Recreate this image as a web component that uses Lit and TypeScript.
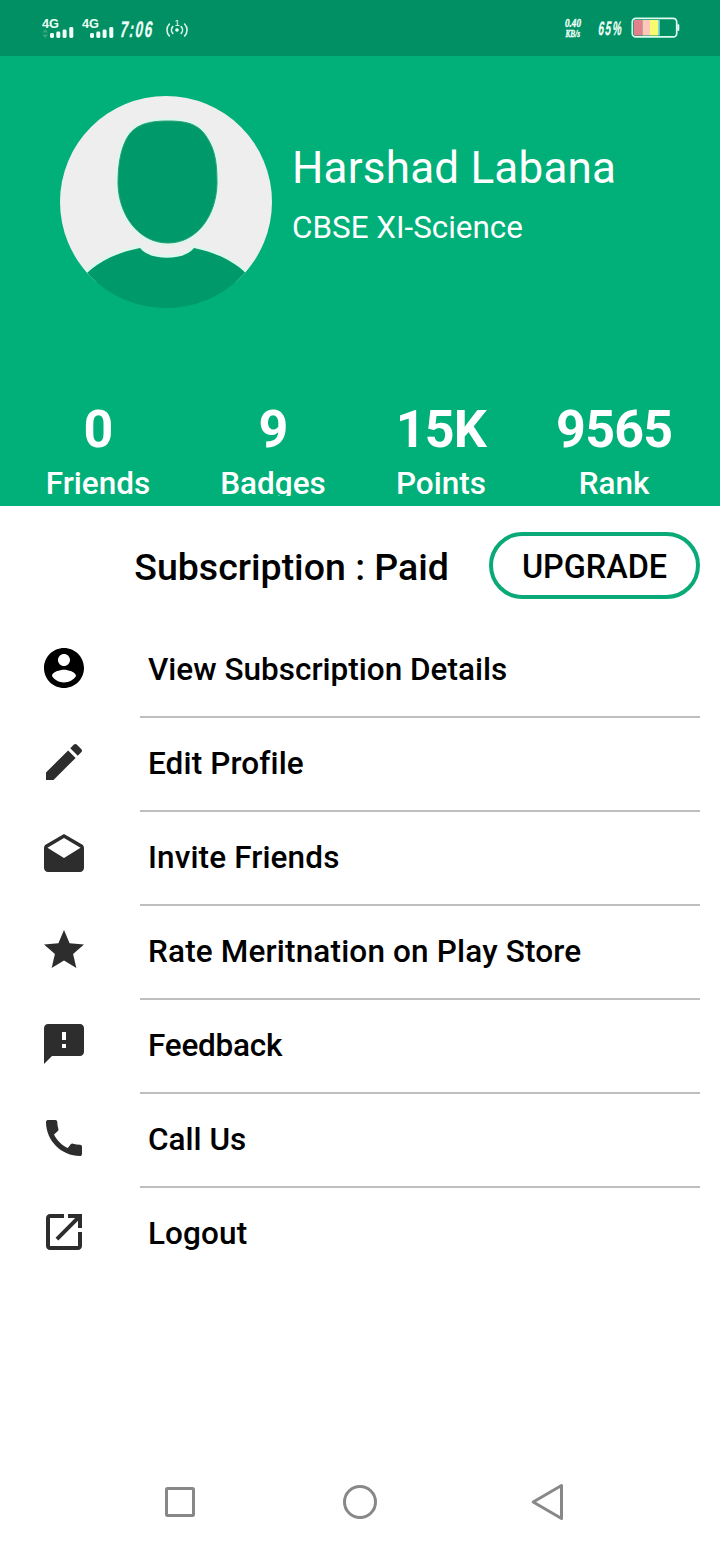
import { LitElement, html, css, svg } from "lit";
import { customElement } from "lit/decorators.js";
import { styleMap } from "lit/directives/style-map.js";

const stats = [
  { value: "0", label: "Friends" },
  { value: "9", label: "Badges" },
  { value: "15K", label: "Points" },
  { value: "9565", label: "Rank" },
];

const menu = [
  {
    label: "View Subscription Details",
    tracking: 0,
    strong: true,
    path: "M12 2C6.48 2 2 6.48 2 12s4.48 10 10 10 10-4.48 10-10S17.52 2 12 2zm0 3c1.66 0 3 1.34 3 3s-1.34 3-3 3-3-1.34-3-3 1.34-3 3-3zm0 14.2c-2.5 0-4.71-1.28-6-3.22.03-1.99 4-3.08 6-3.08 1.99 0 5.97 1.09 6 3.08-1.29 1.94-3.5 3.22-6 3.22z",
  },
  {
    label: "Edit Profile",
    tracking: 0.12,
    path: "M3 17.25V21h3.75L17.81 9.94l-3.75-3.75L3 17.25zM20.71 7.04c.39-.39.39-1.02 0-1.41l-2.34-2.34c-.39-.39-1.02-.39-1.41 0l-1.83 1.83 3.75 3.75 1.83-1.83z",
  },
  {
    label: "Invite Friends",
    tracking: 0.12,
    path: "M21.99 8c0-.72-.37-1.35-.94-1.7L12 1 2.95 6.3C2.38 6.65 2 7.28 2 8v10c0 1.1.9 2 2 2h16c1.1 0 2-.9 2-2l-.01-10zM12 13L3.74 7.84 12 3l8.26 4.84L12 13z",
  },
  {
    label: "Rate Meritnation on Play Store",
    tracking: 0.16,
    path: "M12 17.27L18.18 21l-1.64-7.03L22 9.24l-7.19-.61L12 2 9.19 8.63 2 9.24l5.46 4.73L5.82 21z",
  },
  {
    label: "Feedback",
    tracking: -0.25,
    path: "M20 2H4c-1.1 0-1.99.9-1.99 2L2 22l4-4h14c1.1 0 2-.9 2-2V4c0-1.1-.9-2-2-2zm-7 12h-2v-2h2v2zm0-4h-2V6h2v4z",
  },
  {
    label: "Call Us",
    tracking: 0,
    path: "M20.01 15.38c-1.23 0-2.42-.2-3.53-.56-.35-.12-.74-.03-1.01.24l-1.57 1.97c-2.83-1.35-5.48-3.9-6.89-6.83l1.95-1.66c.27-.28.35-.67.24-1.02-.37-1.11-.56-2.3-.56-3.53 0-.54-.45-.99-.99-.99H4.19C3.65 3 3 3.24 3 3.99 3 13.28 10.73 21 20.01 21c.71 0 .99-.63.99-1.18v-3.45c0-.54-.45-.99-.99-.99z",
  },
  {
    label: "Logout",
    tracking: 0.1,
    path: "M5 3C3.9 3 3 3.9 3 5v14c0 1.1.9 2 2 2h14c1.1 0 2-.9 2-2v-7h-2v7H5V5h7V3H5zM14 3v2h3.59L7.76 14.83l1.41 1.41L19 6.41V10h2V3h-7z",
  },
];

@customElement("status-bar")
class StatusBar extends LitElement {
  static styles = css`
    :host { display: block; height: 56px; background: #009063; }
    svg { display: block; }
    .sans { font-family: "Liberation Sans", sans-serif; font-weight: 700; }
    .light { font-family: "Liberation Sans", sans-serif; font-weight: 400; }
    .serif { font-family: "Liberation Serif", serif; font-weight: 700; font-style: italic; stroke: #effff8; stroke-width: 0.4; }
    .cond { font-family: "Liberation Sans", sans-serif; font-weight: 700; font-style: italic; stroke: #effff8; stroke-width: 0.3; }
  `;

  private signal(x: number) {
    return svg`
      <text class="sans" x=${x} y="28" font-size="12.5" textLength="17" lengthAdjust="spacingAndGlyphs">4G</text>
      <rect x=${x + 8} y="33" width="4" height="5" rx="1.4"/>
      <rect x=${x + 14.3} y="31.5" width="4" height="6.5" rx="1.4"/>
      <rect x=${x + 20.6} y="29.5" width="4" height="8.5" rx="1.4"/>
      <rect x=${x + 27.3} y="27" width="4" height="11" rx="1.4"/>`;
  }

  render() {
    return html`<svg width="720" height="56" viewBox="0 0 720 56" fill="#effff8">
      ${this.signal(42)}
      <path d="M42.3 32.6L45.2 29l2.9 3.6zM42.3 34.6h5.8L45.2 38.2z" fill="#35a57c"/>
      ${this.signal(82)}
      <g class="cond" font-size="22.5" transform="translate(120 37) skewX(-4) scale(.6 1)"><text letter-spacing="2.6">7:06</text></g>
      <circle cx="177" cy="30" r="1.8"/>
      <text class="light" x="174.4" y="26" font-size="9.5">1</text>
      <g fill="none" stroke="#d8f5e8" stroke-width="1.6" stroke-linecap="round">
        <path d="M172.8 26.6a5 5 0 0 0 0 6.8M169.4 24a8.6 8.6 0 0 0 0 12M181.2 26.6a5 5 0 0 1 0 6.8M184.6 24a8.6 8.6 0 0 1 0 12"/>
      </g>
      <text class="serif" x="565" y="27" font-size="12.5" textLength="16" lengthAdjust="spacingAndGlyphs">0.40</text>
      <text class="serif" x="565.5" y="37" font-size="10" textLength="14.5" lengthAdjust="spacingAndGlyphs">KB/s</text>
      <g class="cond" font-size="19.5" transform="translate(598 35) skewX(-4) scale(.52 1)"><text letter-spacing="2.8">65%</text></g>
      <rect x="634" y="20" width="8.5" height="15.5" fill="#e2808b"/>
      <rect x="642.5" y="20" width="7.5" height="15.5" fill="#fdc7b9"/>
      <rect x="650" y="20" width="8" height="15.5" fill="#f8fa70"/>
      <rect x="658" y="20" width="1.8" height="15.5" fill="#7fd8d4"/>
      <rect x="632.3" y="18.3" width="44.4" height="18.6" rx="3.5" fill="none" stroke="#dcfcee" stroke-width="1.7"/>
      <rect x="677.3" y="24.3" width="2" height="6.6" rx=".8"/>
    </svg>`;
  }
}

@customElement("profile-header")
class ProfileHeader extends LitElement {
  static styles = css`
    :host {
      display: flex; flex-direction: column; justify-content: space-between;
      box-sizing: border-box; height: 450px; padding: 40px 0 10px;
      background: #01af79; color: #fff; font-family: Roboto, sans-serif; font-weight: 400;
    }
    .person { display: flex; gap: 20px; padding-left: 60px; }
    .avatar { display: block; width: 212px; height: 212px; }
    .who { padding-top: 46px; }
    .name { font-size: 44px; line-height: 52px; letter-spacing: 0.2px; }
    .course { font-size: 31.4px; line-height: 36px; margin-top: 16px; }
    .stats { display: flex; justify-content: center; gap: 70px; height: 97px; padding-right: 2px; overflow: hidden; }
    .stat { text-align: center; }
    .value { font-size: 52px; line-height: 62px; font-weight: 700; letter-spacing: -0.8px; }
    .label { font-size: 31.5px; line-height: 36px; margin-top: 5px; font-weight: 500; }
  `;

  render() {
    return html`
      <div class="person">
        <svg class="avatar" viewBox="0 0 212 212">
          <defs><clipPath id="round"><circle cx="106" cy="106" r="106"/></clipPath></defs>
          <g clip-path="url(#round)">
            <rect width="212" height="186" fill="#eee"/>
            <path d="M0 212C18 185 31 162 80 152C89 165 125 165 134 152C180 162 194 183 212 212V230H0Z"
              fill="#00996a" stroke="#dcf7eb" stroke-width="5" paint-order="stroke"/>
            <path d="M108 25C85 25 72 30 65 46C60 57 58 71 58 88C59 121 80 147 108 147C136 147 156 121 157 88C157 71 156 57 149 45C141 30 131 25 108 25Z"
              fill="#00996a" stroke="#dcf7eb" stroke-width="5" paint-order="stroke"/>
            <path d="M108 25C85 25 72 30 65 46C60 57 58 71 58 88C59 121 80 147 108 147C136 147 156 121 157 88C157 71 156 57 149 45C141 30 131 25 108 25Z"
              fill="none" stroke="#2b9f77" stroke-width="1"/>
          </g>
        </svg>
        <div class="who">
          <div class="name">Harshad Labana</div>
          <div class="course">CBSE XI-Science</div>
        </div>
      </div>
      <div class="stats">
        ${stats.map((s) => html`<div class="stat"><div class="value">${s.value}</div><div class="label">${s.label}</div></div>`)}
      </div>`;
  }
}

@customElement("app-root")
class AppRoot extends LitElement {
  static styles = css`
    :host {
      display: flex; flex-direction: column; height: 1544px;
      background: #fff; color: #000; font-family: Roboto, sans-serif; font-weight: 500;
    }
    .plan {
      display: flex; justify-content: flex-end; align-items: center; gap: 40px;
      height: 67px; padding: 26px 20px 25px 0;
    }
    .status { font-size: 37.5px; line-height: 44px; padding-top: 2px; }
    .upgrade {
      box-sizing: border-box; width: 211px; height: 67px; border: 4px solid #0aaa78;
      border-radius: 34px; background: #fff; color: #000; padding: 3px 0 0;
      font: 500 32.4px/38px Roboto, sans-serif; text-align: center;
    }
    .row { display: flex; align-items: center; height: 94px; padding: 0 20px 0 40px; }
    .icon { width: 48px; height: 48px; margin: 0 52px 6px 0; fill: #2d2d2d; flex: none; }
    .icon.strong { fill: #000; }
    .text {
      flex: 1; box-sizing: border-box; height: 94px; padding: 28px 0 0 8px;
      border-bottom: 2px solid #bfbfbf; font-size: 31.5px; line-height: 36px;
    }
    .row:last-child .text { border-bottom-color: transparent; }
    .nav {
      display: flex; align-items: center; gap: 140px;
      margin-top: auto; height: 84px; padding-left: 160px;
      fill: none; stroke: #888; stroke-width: 3; stroke-linejoin: round;
    }
    .nav svg { width: 40px; height: 40px; }
    .nav svg:last-child { margin-left: 8px; }
  `;

  render() {
    return html`
      <status-bar></status-bar>
      <profile-header></profile-header>
      <div class="plan">
        <div class="status">Subscription : Paid</div>
        <button class="upgrade">UPGRADE</button>
      </div>
      <div class="menu">
        ${menu.map((m) => html`<div class="row">
          <svg class="icon ${m.strong ? "strong" : ""}" viewBox="0 0 24 24"><path d=${m.path}/></svg>
          <div class="text" style=${styleMap({ letterSpacing: `${m.tracking}px` })}>${m.label}</div>
        </div>`)}
      </div>
      <div class="nav">
        <svg viewBox="0 0 40 40"><rect x="6.5" y="6.5" width="27" height="27" rx="1"/></svg>
        <svg viewBox="0 0 40 40"><circle cx="20" cy="20" r="15.5"/></svg>
        <svg viewBox="0 0 40 40"><path d="M5.2 20L33.5 3.5V36.5Z"/></svg>
      </div>`;
  }
}
